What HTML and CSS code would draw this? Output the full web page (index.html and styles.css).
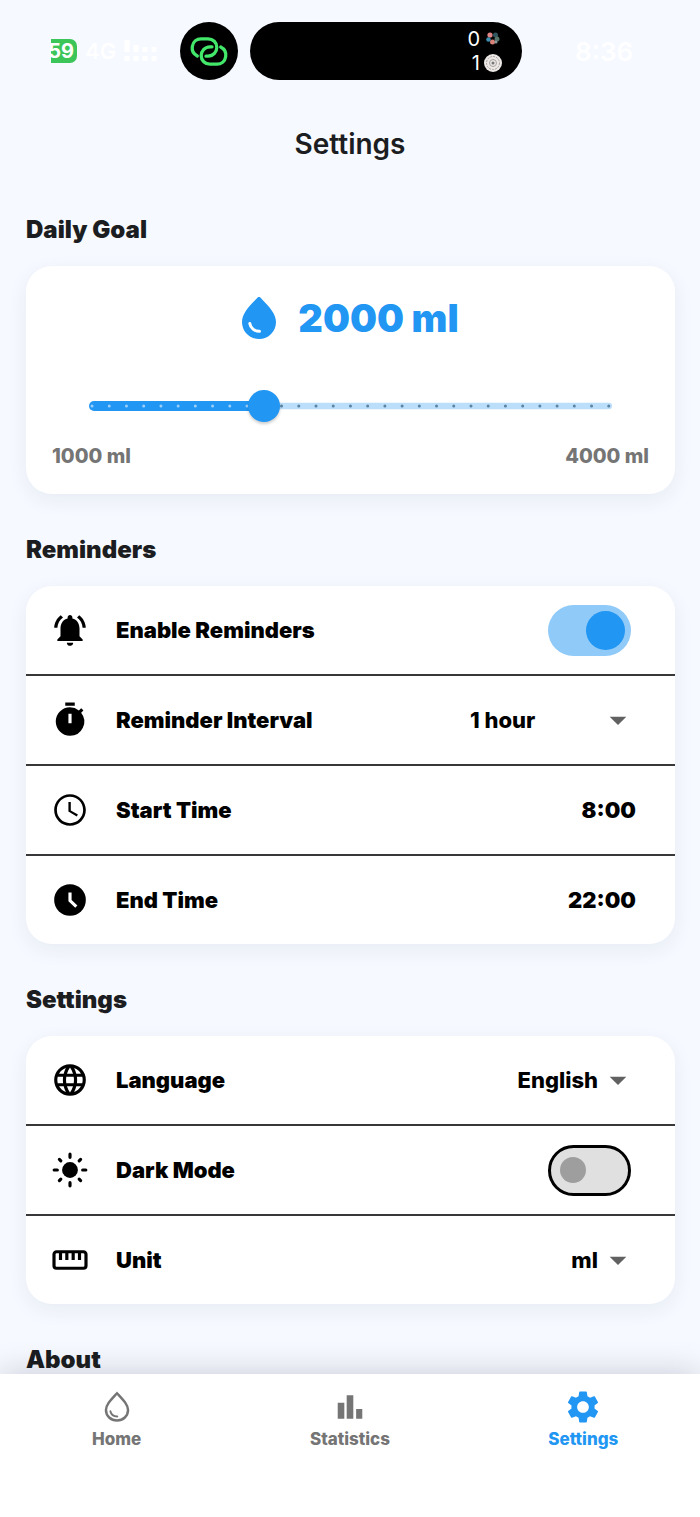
FILE: index.html
```html
<!DOCTYPE html>
<html lang="en">
<head>
<meta charset="utf-8">
<meta name="viewport" content="width=device-width, initial-scale=1">
<title>Settings</title>
<link rel="stylesheet" href="styles.css">
</head>
<body>
<div class="app">
  <header class="status">
    <div class="status-left">
      <span class="battery">59</span>
      <span class="network">4G</span>
      <svg class="signal" viewBox="0 0 34 24" aria-hidden="true">
        <path d="M3 1v12M12 6v7M21 8v5M30 8v5M3 17v5M12 17v5M21 17v5M30 17v5" stroke="#fff" stroke-width="5"/>
      </svg>
    </div>
    <div class="hotspot">
      <svg viewBox="0 0 58 58" aria-hidden="true">
        <g fill="none" stroke="#43e86a" stroke-width="3.300" stroke-linecap="round">
          <path d="M17.300 34C13.500 32 11.700 28.500 12.300 24.500C13 19.500 17 16.800 21 16.800H28C33 16.800 36.800 20.500 36.800 25.300C36.800 30 33.500 34 28 34.200H26"/>
          <path d="M40.700 25C44.500 27 46.300 30.500 45.700 34.500C45 39.500 41 42.200 37 42.200H30C25 42.200 21.200 38.500 21.200 33.700C21.200 29 24.500 25 30 24.800H32"/>
        </g>
      </svg>
    </div>
    <div class="island">
      <div class="score"><span>0</span>
        <svg viewBox="0 0 18 18" aria-hidden="true">
          <circle cx="6" cy="5" r="2.600" fill="#e08585"/><circle cx="11.500" cy="5" r="2.500" fill="#31555c"/>
          <circle cx="4.500" cy="9.500" r="2.300" fill="#3f8fb0"/><circle cx="13" cy="9" r="2.500" fill="#56756b"/>
          <circle cx="8.500" cy="12" r="2.500" fill="#d98378"/><circle cx="12" cy="12" r="1.500" fill="#8b9ba0"/>
        </svg>
      </div>
      <div class="score"><span>1</span>
        <svg viewBox="0 0 18 18" aria-hidden="true">
          <circle cx="9" cy="9" r="9" fill="#ece8e6"/>
          <g fill="none" stroke="#a9a2a0"><circle cx="9" cy="9" r="6.500" stroke-dasharray="2 1"/><circle cx="9" cy="9" r="3.500"/></g>
          <circle cx="9" cy="9" r="1.500" fill="#777"/>
        </svg>
      </div>
    </div>
    <time class="clock">8:36</time>
  </header>

  <h1 class="title">Settings</h1>

  <main class="content">
    <section class="section">
      <h2 class="heading">Daily Goal</h2>
      <div class="card goal">
        <div class="goal-value">
          <svg class="goal-drop" viewBox="0 0 34 42" aria-hidden="true">
            <path fill="#2196f3" d="M17 0C18 0 18.600 .700 19.500 1.700C27 9.500 34 16.500 34 25C34 34.500 26.500 42 17 42S0 34.500 0 25C0 16.500 7 9.500 14.500 1.700C15.400 .700 16 0 17 0z"/>
            <path fill="none" stroke="#fff" stroke-width="3" stroke-linecap="round" d="M7.800 26.500C8.500 31 12.500 34.300 17.500 34.300"/>
          </svg>
          <output for="goal">2000 ml</output>
        </div>
        <div class="slider">
          <svg class="slider-track" viewBox="0 0 548 32" preserveAspectRatio="none" aria-hidden="true">
            <rect x="180" y="12.700" width="355" height="6.600" rx="3" fill="#bbdefb"/>
            <rect x="13" y="11" width="180" height="10" rx="5" fill="#2196f3"/>
            <g fill="none" stroke-width="3" stroke-linecap="round">
              <path d="M188 16H532" stroke="#5b84a3" stroke-dasharray="0 17.190"/>
              <path d="M16 16H188" stroke="#9bcffa" stroke-dasharray="0 17.190"/>
            </g>
          </svg>
          <input class="slider-input" id="goal" type="range" min="1000" max="4000" step="100" value="2000" aria-label="Daily goal">
        </div>
        <div class="range"><span>1000 ml</span><span>4000 ml</span></div>
      </div>
    </section>

    <section class="section">
      <h2 class="heading">Reminders</h2>
      <div class="card">
        <div class="row">
          <svg class="icon" viewBox="0 0 24 24" aria-hidden="true"><path d="M7.580 4.080L6.150 2.650C3.750 4.480 2.170 7.300 2.030 10.500h2c.15-2.650 1.510-4.970 3.550-6.420zm12.390 6.420h2c-.15-3.200-1.730-6.020-4.120-7.850l-1.420 1.430c2.020 1.450 3.390 3.770 3.540 6.420zM18 11c0-3.070-1.640-5.640-4.500-6.320V4c0-.83-.67-1.500-1.500-1.500s-1.500.67-1.500 1.500v.68C7.630 5.360 6 7.920 6 11v5l-2 2v1h16v-1l-2-2v-5zm-6 11c.14 0 .27-.01.4-.04.65-.14 1.180-.58 1.440-1.180.1-.24.15-.5.15-.78h-4c.01 1.100.9 2 2.010 2z"/></svg>
          <label class="label" for="enable">Enable Reminders</label>
          <input class="switch" id="enable" type="checkbox" role="switch" checked>
        </div>
        <div class="row">
          <svg class="icon" viewBox="0 0 24 24" aria-hidden="true"><path d="M9 1h6v2H9zM19.030 7.390l1.420-1.420c-.43-.51-.9-.99-1.410-1.410l-1.420 1.420A8.962 8.962 0 0 0 12 4c-4.970 0-9 4.030-9 9s4.020 9 9 9a8.994 8.994 0 0 0 7.030-14.610zM13 14h-2V8h2v6z"/></svg>
          <label class="label" for="interval">Reminder Interval</label>
          <div class="picker">
            <select class="select select-start" id="interval"><option>1 hour</option><option>2 hours</option></select>
            <svg class="arrow" viewBox="0 0 24 24" aria-hidden="true"><path d="M7 10l5 5 5-5z"/></svg>
          </div>
        </div>
        <div class="row">
          <svg class="icon" viewBox="0 0 24 24" aria-hidden="true"><path d="M11.990 2C6.470 2 2 6.480 2 12s4.470 10 9.990 10C17.520 22 22 17.520 22 12S17.520 2 11.990 2zM12 20.300c-4.600 0-8.300-3.700-8.300-8.300s3.700-8.300 8.300-8.300 8.300 3.700 8.300 8.300-3.700 8.300-8.300 8.300zm.5-13.300H11v6l5.250 3.150.75-1.230-4.500-2.670z"/></svg>
          <span class="label" id="start-label">Start Time</span>
          <button class="time" type="button" aria-describedby="start-label">8:00</button>
        </div>
        <div class="row">
          <svg class="icon" viewBox="0 0 24 24" aria-hidden="true"><circle cx="12" cy="12" r="10"/><path d="M12 7.200v5.200l4 3.800" fill="none" stroke="#fff" stroke-width="2"/></svg>
          <span class="label" id="end-label">End Time</span>
          <button class="time" type="button" aria-describedby="end-label">22:00</button>
        </div>
      </div>
    </section>

    <section class="section">
      <h2 class="heading">Settings</h2>
      <div class="card">
        <div class="row">
          <svg class="icon" viewBox="0 0 24 24" aria-hidden="true"><path d="M16.360 14C16.440 13.340 16.500 12.680 16.500 12C16.500 11.320 16.440 10.660 16.360 10H19.740C19.900 10.640 20 11.310 20 12C20 12.690 19.900 13.360 19.740 14M14.590 19.560C15.190 18.450 15.650 17.250 15.970 16H18.920C17.960 17.650 16.430 18.930 14.590 19.560M14.340 14H9.660C9.560 13.340 9.500 12.680 9.500 12C9.500 11.320 9.560 10.650 9.660 10H14.340C14.430 10.650 14.500 11.320 14.500 12C14.500 12.680 14.430 13.340 14.340 14M12 19.960C11.170 18.760 10.500 17.430 10.090 16H13.910C13.500 17.430 12.830 18.760 12 19.960M8 8H5.080C6.030 6.340 7.570 5.060 9.400 4.440C8.800 5.550 8.350 6.750 8 8M5.080 16H8C8.350 17.250 8.800 18.450 9.400 19.560C7.570 18.930 6.030 17.650 5.080 16M4.260 14C4.100 13.360 4 12.690 4 12C4 11.310 4.100 10.640 4.260 10H7.640C7.560 10.660 7.500 11.320 7.500 12C7.500 12.680 7.560 13.340 7.640 14M12 4.030C12.830 5.230 13.500 6.570 13.910 8H10.090C10.500 6.570 11.170 5.230 12 4.030M18.920 8H15.970C15.650 6.750 15.190 5.550 14.590 4.440C16.430 5.070 17.960 6.340 18.920 8M12 2C6.470 2 2 6.500 2 12A10 10 0 0 0 12 22A10 10 0 0 0 22 12A10 10 0 0 0 12 2Z"/></svg>
          <label class="label" for="language">Language</label>
          <div class="picker">
            <select class="select" id="language"><option>English</option></select>
            <svg class="arrow" viewBox="0 0 24 24" aria-hidden="true"><path d="M7 10l5 5 5-5z"/></svg>
          </div>
        </div>
        <div class="row">
          <svg class="icon" viewBox="0 0 24 24" aria-hidden="true"><circle cx="12" cy="12" r="5"/><path fill="none" stroke="#000" stroke-width="2" stroke-linecap="round" d="M12 2v2M12 20v2M2 12h2M20 12h2M5.300 5.300l.9.9M17.800 17.800l.9.9M18.700 5.300l-.9.9M6.200 17.800l-.9.9"/></svg>
          <label class="label" for="dark">Dark Mode</label>
          <input class="switch" id="dark" type="checkbox" role="switch">
        </div>
        <div class="row">
          <svg class="icon" viewBox="0 0 24 24" aria-hidden="true"><path fill="none" stroke="#000" stroke-width="2" d="M3.500 6.800h17a1.600 1.600 0 0 1 1.600 1.600v7.200a1.600 1.600 0 0 1-1.600 1.600h-17a1.600 1.600 0 0 1-1.600-1.600V8.400A1.600 1.600 0 0 1 3.500 6.800zM6 7v5M10 7v5M14 7v5M18 7v5"/></svg>
          <label class="label" for="unit">Unit</label>
          <div class="picker">
            <select class="select" id="unit"><option>ml</option></select>
            <svg class="arrow" viewBox="0 0 24 24" aria-hidden="true"><path d="M7 10l5 5 5-5z"/></svg>
          </div>
        </div>
      </div>
    </section>

    <section class="section">
      <h2 class="heading">About</h2>
    </section>
  </main>

  <nav class="nav" aria-label="Main">
    <a class="tab" href="#home">
      <svg class="tab-icon" viewBox="0 0 36 36" aria-hidden="true"><g fill="none" stroke="currentColor" stroke-linecap="round"><path stroke-width="2.600" d="M18 3.400C11.500 10.500 6.300 15.500 6.300 21.300C6.300 27.700 11.500 32.200 18 32.200S29.700 27.700 29.700 21.300C29.700 15.500 24.500 10.500 18 3.400z"/><path stroke-width="2" d="M11 22.500C11.700 25.800 14.500 28 18.300 28"/></g></svg>
      Home
    </a>
    <a class="tab" href="#statistics">
      <svg class="tab-icon" viewBox="0 0 36 36" aria-hidden="true"><path fill="currentColor" d="M5 13.500h7v17H5zM14.500 5.500h7v25h-7zM24.500 20h6.500v10.500h-6.500z"/></svg>
      Statistics
    </a>
    <a class="tab tab-active" href="#settings" aria-current="page">
      <svg class="tab-icon" viewBox="1 1 22 22" aria-hidden="true"><path fill="currentColor" d="M19.430 12.980c.04-.32.07-.64.07-.98s-.03-.66-.07-.98l2.110-1.650c.19-.15.24-.42.12-.64l-2-3.460c-.12-.22-.39-.3-.61-.22l-2.490 1c-.52-.4-1.080-.73-1.690-.98l-.38-2.650C14.460 2.180 14.250 2 14 2h-4c-.25 0-.46.18-.49.42l-.38 2.650c-.61.25-1.170.59-1.690.98l-2.490-1c-.23-.09-.49 0-.61.22l-2 3.460c-.13.22-.07.49.12.64l2.110 1.650c-.04.32-.07.65-.07.98s.03.66.07.98l-2.110 1.650c-.19.15-.24.42-.12.64l2 3.460c.12.22.39.3.61.22l2.490-1c.52.4 1.080.73 1.690.98l.38 2.650c.03.24.24.42.49.42h4c.25 0 .46-.18.49-.42l.38-2.650c.61-.25 1.170-.59 1.690-.98l2.490 1c.23.09.49 0 .61-.22l2-3.460c.12-.22.07-.49-.12-.64l-2.110-1.650zM12 15.800c-2.100 0-3.800-1.700-3.800-3.800s1.700-3.800 3.800-3.800 3.800 1.700 3.800 3.800-1.700 3.800-3.800 3.800z"/></svg>
      Settings
    </a>
  </nav>
</div>
</body>
</html>
```

FILE: styles.css
```css
* {
  box-sizing: border-box;
}

body {
  margin: 0;
  background: #f6f9ff;
  color: #1b1d20;
  font-family: Inter, "Liberation Sans", sans-serif;
}

.app {
  display: flex;
  flex-direction: column;
  height: 100vh;
}

/* Status bar */

.status {
  display: flex;
  align-items: center;
  flex: none;
  height: 80px;
  padding: 22px 0 0 51px;
  color: #fff;
}

.status-left {
  display: flex;
  align-items: center;
  gap: 8px;
  width: 129px;
}

.battery {
  display: flex;
  justify-content: flex-end;
  width: 26px;
  padding-right: 3px;
  border-radius: 0 7px 7px 0;
  background: #3cc65a;
  font-size: 20px;
  font-weight: 700;
  line-height: 24px;
}

.network {
  font-size: 22px;
  font-weight: 600;
}

.signal {
  width: 34px;
  height: 24px;
}

.hotspot {
  width: 58px;
  height: 58px;
  border-radius: 50%;
  background: #000;
}

.island {
  display: flex;
  flex-direction: column;
  justify-content: center;
  align-items: flex-end;
  width: 272px;
  height: 58px;
  margin: 0 53px 0 12px;
  padding-right: 20px;
  border-radius: 29px;
  background: #000;
}

.score {
  display: flex;
  align-items: center;
  gap: 4px;
  font-size: 20px;
  line-height: 24px;
}

.score svg {
  width: 18px;
  height: 18px;
}

.clock {
  font-size: 26px;
  font-weight: 600;
}

/* Page */

.title {
  flex: none;
  margin: 44px 0 14px;
  font-size: 28px;
  font-weight: 600;
  line-height: 40px;
  text-align: center;
}

.content {
  flex: 1;
  min-height: 0;
  padding: 0 25px 0 26px;
  margin-top: -4px;
  overflow: hidden auto;
  scrollbar-width: none;
}

.section {
  padding-top: 40px;
}

.heading {
  margin: 0 0 20px;
  font-size: 24px;
  font-weight: 900;
  line-height: 32px;
}

.card {
  border-radius: 26px;
  background: #fff;
  box-shadow: 0 6px 20px rgba(40, 60, 90, 0.07);
}

/* Daily goal */

.goal {
  padding: 28px 26px 24px;
}

.goal-value {
  display: flex;
  align-items: center;
  justify-content: center;
  gap: 22px;
  color: #2196f3;
  font-size: 38px;
  font-weight: 900;
  line-height: 48px;
}

.goal-drop {
  width: 34px;
  height: 42px;
}

.slider {
  display: grid;
  margin: 48px 24px 20px;
}

.slider-track,
.slider-input {
  grid-area: 1 / 1;
  width: 100%;
  height: 32px;
  margin: 0;
}

.slider-input {
  appearance: none;
  background: transparent;
}

.slider-input::-webkit-slider-thumb {
  appearance: none;
  width: 32px;
  height: 32px;
  border-radius: 50%;
  background: #2196f3;
  box-shadow: 0 2px 3px rgba(0, 0, 0, 0.2);
}

.range {
  display: flex;
  justify-content: space-between;
  color: #757575;
  font-size: 20px;
  font-weight: 800;
  line-height: 28px;
}

/* Setting rows */

.row {
  display: flex;
  align-items: center;
  height: 88px;
  padding: 0 37px 0 24px;
}

.row + .row {
  height: 90px;
  border-top: 2px solid #37373a;
}

.icon {
  flex: none;
  width: 38px;
  height: 38px;
  margin: 0 27px 0 1px;
}

.label {
  flex: 1;
  color: #000;
  font-size: 22px;
  font-weight: 900;
  line-height: 28px;
}

.picker {
  display: grid;
  align-items: center;
  width: 168px;
}

.select {
  grid-area: 1 / 1;
  width: 100%;
  padding: 0 40px 0 0;
  border: 0;
  appearance: none;
  background: transparent;
  color: #000;
  font: 800 22px/28px Inter, "Liberation Sans", sans-serif;
  text-align-last: right;
}

.select-start {
  text-align-last: left;
}

.arrow {
  grid-area: 1 / 1;
  justify-self: end;
  width: 40px;
  height: 40px;
  fill: #616161;
  pointer-events: none;
}

.time {
  padding: 0 2px 0 0;
  border: 0;
  background: none;
  color: #000;
  font: 900 22px/28px Inter, "Liberation Sans", sans-serif;
}

.switch {
  display: flex;
  align-items: center;
  width: 83px;
  height: 51px;
  margin: 0 7px 0 0;
  padding-left: 9px;
  border: 3px solid #000;
  border-radius: 26px;
  appearance: none;
  background: #e0e0e0;
}

.switch::before {
  width: 26px;
  height: 26px;
  border-radius: 50%;
  background: #9e9e9e;
  content: "";
}

.switch:checked {
  justify-content: flex-end;
  padding: 0 6px 0 0;
  border: 0;
  background: #90caf9;
}

.switch:checked::before {
  width: 39px;
  height: 39px;
  background: #2196f3;
}

/* Bottom navigation */

.nav {
  position: relative;
  display: grid;
  flex: none;
  grid-template-columns: repeat(3, 1fr);
  padding: 16px 0 67px;
  background: #fff;
  box-shadow: 0 0 32px rgba(20, 20, 40, 0.2);
}

.tab {
  display: flex;
  flex-direction: column;
  align-items: center;
  gap: 2px;
  color: #757575;
  font-size: 17px;
  font-weight: 800;
  line-height: 22px;
  text-decoration: none;
}

.tab-icon {
  width: 34px;
  height: 34px;
  margin-bottom: 2px;
}

.tab-active {
  color: #2196f3;
}
```
